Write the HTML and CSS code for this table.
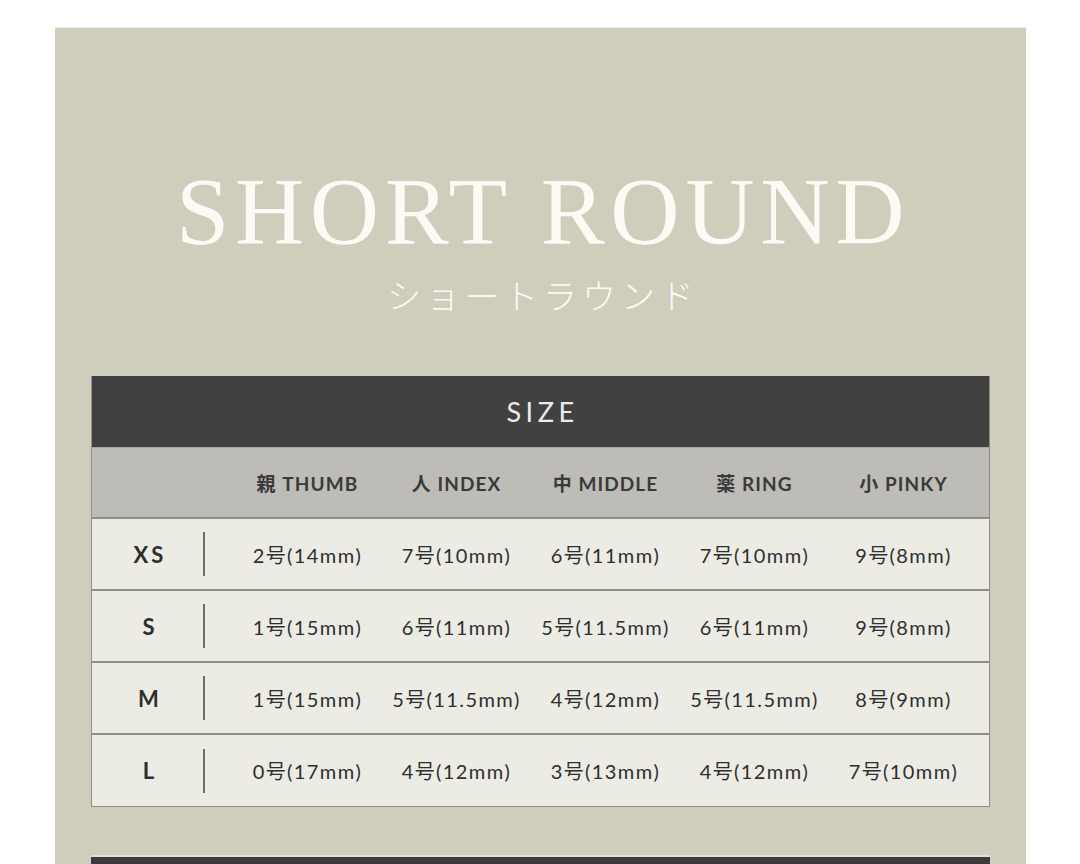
FILE: index.html
```html
<!DOCTYPE html>
<html lang="ja">
<head>
<meta charset="utf-8">
<title>SHORT ROUND</title>
<link rel="stylesheet" href="styles.css">
</head>
<body>
<main class="panel">
  <h1 class="title">SHORT ROUND</h1>
  <p class="kana">ショートラウンド</p>

  <section class="size-table">
    <div class="table-head">SIZE</div>
    <div class="row row-cols">
      <div class="size-spacer"></div>
      <div class="cells">
        <span>親 THUMB</span>
        <span>人 INDEX</span>
        <span>中 MIDDLE</span>
        <span>薬 RING</span>
        <span>小 PINKY</span>
      </div>
    </div>
    <div class="row row-data">
      <div class="size-label">XS</div>
      <div class="cells">
        <span>2号(14mm)</span>
        <span>7号(10mm)</span>
        <span>6号(11mm)</span>
        <span>7号(10mm)</span>
        <span>9号(8mm)</span>
      </div>
    </div>
    <div class="row row-data">
      <div class="size-label">S</div>
      <div class="cells">
        <span>1号(15mm)</span>
        <span>6号(11mm)</span>
        <span>5号(11.5mm)</span>
        <span>6号(11mm)</span>
        <span>9号(8mm)</span>
      </div>
    </div>
    <div class="row row-data">
      <div class="size-label">M</div>
      <div class="cells">
        <span>1号(15mm)</span>
        <span>5号(11.5mm)</span>
        <span>4号(12mm)</span>
        <span>5号(11.5mm)</span>
        <span>8号(9mm)</span>
      </div>
    </div>
    <div class="row row-data">
      <div class="size-label">L</div>
      <div class="cells">
        <span>0号(17mm)</span>
        <span>4号(12mm)</span>
        <span>3号(13mm)</span>
        <span>4号(12mm)</span>
        <span>7号(10mm)</span>
      </div>
    </div>
  </section>

  <div class="next-block"></div>
</main>
</body>
</html>
```

FILE: styles.css
```css
html, body {
  margin: 0;
  padding: 0;
  background: #ffffff;
  overflow: hidden;
}

.panel {
  margin: 27px 0 0 55px;
  width: 971px;
  height: 837px;
  background: #cfcdbc;
  border-top: 1px solid #ecebdd;
  box-sizing: border-box;
  padding-top: 136px;
  display: flex;
  flex-direction: column;
  align-items: center;
}

.title {
  margin: 0;
  font-family: "Liberation Serif", "DejaVu Serif", serif;
  font-weight: 400;
  font-size: 96px;
  line-height: 1;
  letter-spacing: 5.6px;
  color: #fbfaf5;
  text-align: center;
  padding-left: 5px;
}

.kana {
  margin: 18px 0 0;
  font-family: "Noto Sans CJK JP", sans-serif;
  font-weight: 300;
  font-size: 34px;
  line-height: 1;
  letter-spacing: 5px;
  color: #fbfaf5;
  padding-left: 5px;
}

.size-table {
  margin-top: 64px;
  width: 899px;
  border: 1px solid #8e8d88;
  border-top: none;
  box-sizing: border-box;
  font-family: "Lato", "Noto Sans CJK JP", sans-serif;
  color: #2f2f2f;
}

.table-head {
  height: 71px;
  background: #414141;
  color: #ececea;
  display: flex;
  align-items: center;
  justify-content: center;
  font-size: 27px;
  font-weight: 400;
  letter-spacing: 4.5px;
  padding-left: 4px;
}

.row {
  height: 72px;
  display: flex;
  align-items: center;
  box-sizing: border-box;
}

.row-cols {
  background: #bdbcb6;
  border-top: 1px solid #a8a7a2;
  border-bottom: 2px solid #8e8d88;
}

.row-data {
  background: #ecebe4;
  border-bottom: 2px solid #8e8d88;
}

.row-data:last-child {
  border-bottom: none;
  height: 71px;
}

.size-spacer {
  width: 113px;
  flex: none;
  margin-right: 28px;
}

.size-label {
  width: 106px;
  padding-left: 5px;
  flex: none;
  height: 44px;
  display: flex;
  align-items: center;
  justify-content: center;
  border-right: 2px solid #6e6e6b;
  margin-right: 28px;
  font-size: 22px;
  font-weight: 700;
  letter-spacing: 3px;
}

.cells {
  display: grid;
  grid-template-columns: repeat(5, 149px);
}

.cells span {
  text-align: center;
  white-space: nowrap;
}

.row-cols .cells span {
  font-size: 19px;
  font-weight: 700;
  letter-spacing: 1.1px;
  color: #3a3a3a;
}

.row-data .cells span {
  font-size: 20px;
  font-weight: 400;
  letter-spacing: 1.4px;
}

.next-block {
  margin-top: 48px;
  width: 899px;
  flex: 1;
  background: #3b3b3b;
  border-top: 2px solid #e2e0d4;
}
```
